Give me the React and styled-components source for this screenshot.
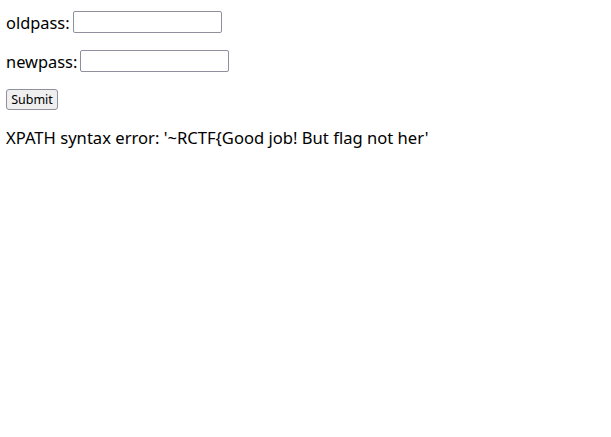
import React from 'react'
import styled, {createGlobalStyle} from 'styled-components'

const Global = createGlobalStyle`
  html, body {
    margin: 0;
    padding: 0;
    background: #ffffff;
  }
  body {
    font-family: "Noto Sans", "Open Sans", sans-serif;
    color: #000000;
  }
`

const Page = styled.div`
  display: flex;
  flex-direction: column;
  padding: 11px 6px 0 6px;
`

const Form = styled.form`
  display: flex;
  flex-direction: column;
  gap: 17px;
`

const Row = styled.div`
  display: flex;
  align-items: center;
  gap: 3px;
  height: 22px;
  font-size: 16.4px;
`

const Field = styled.input`
  box-sizing: border-box;
  width: 149px;
  height: 22px;
  border: 1px solid #8f8f9d;
  border-radius: 2px;
  background: #ffffff;
  padding: 1px 2px;
  margin: 0;
`

const Submit = styled.button`
  box-sizing: border-box;
  width: 52px;
  height: 21px;
  margin: -1px 0 0 0;
  padding: 0;
  font-family: "Noto Sans", sans-serif;
  font-size: 12.5px;
  color: #000000;
  background: #efefef;
  border: 1px solid #8f8f9d;
  border-radius: 3px;
`

const Message = styled.p`
  margin: 16px 0 0 0;
  font-size: 16.6px;
  line-height: 22px;
`

export default function App() {
  return (
    <Page>
      <Global />
      <Form onSubmit={e => e.preventDefault()}>
        <Row>
          <span>oldpass:</span>
          <Field type="text" name="oldpass" />
        </Row>
        <Row>
          <span>newpass:</span>
          <Field type="text" name="newpass" />
        </Row>
        <Row>
          <Submit type="submit">Submit</Submit>
        </Row>
      </Form>
      <Message>XPATH syntax error: '~RCTF&#123;Good job! But flag not her'</Message>
    </Page>
  )
}
